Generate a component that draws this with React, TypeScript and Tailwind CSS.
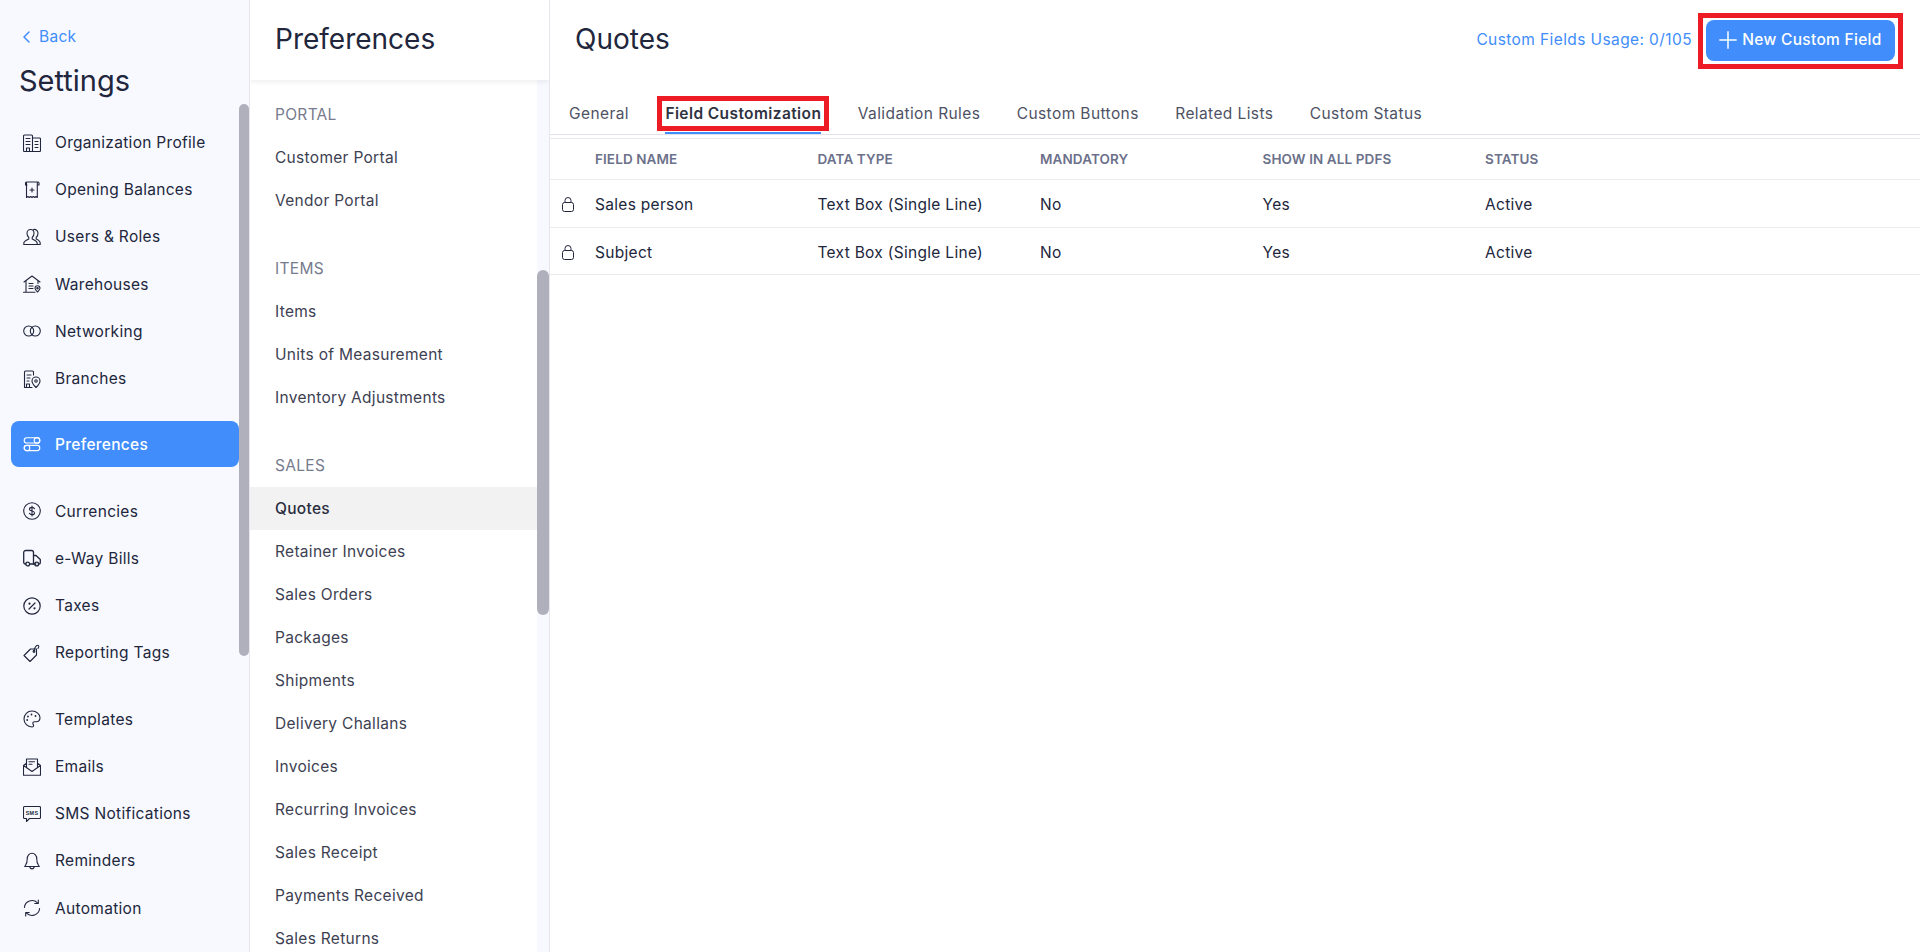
import React from 'react';

type Icon = { children: React.ReactNode };

function Ico({ children }: Icon) {
  return (
    <svg width="18" height="18" viewBox="0 0 18 18" fill="none" stroke="currentColor" strokeWidth="1.100" strokeLinecap="round" strokeLinejoin="round" className="shrink-0">
      {children}
    </svg>
  );
}

const icons: Record<string, React.ReactNode> = {
  org: (
    <>
      <path d="M.5 16.500V2A1 1 0 0 1 1.500 1h7a1 1 0 0 1 1 1v15.500h-8a1 1 0 0 1-1-1z" />
      <path d="M9.500 4h7a1 1 0 0 1 1 1v11.500a1 1 0 0 1-1 1h-7" />
      <path d="M3 4.500h4M3 7.500h4M3 10.500h4M3.500 17.500V14h3v3.500M12 7.500h3M12 10.500h3M12 13.500h3" />
    </>
  ),
  opening: (
    <>
      <path d="M3.500 1h11.500a1 1 0 0 1 1 1v2h-1.500M3.500 1a1 1 0 0 0-1 1v2H4" />
      <path d="M3.500 1.500v15l1.500-1 1.300 1 1.400-1 1.300 1 1.300-1 1.400 1 1.300-1 1.300 1V1.500" />
      <path d="M9 7v4M7 9h4" />
    </>
  ),
  users: (
    <>
      <path d="M7.500 1.500c-2 0-3.500 1.500-3.500 3.700 0 1.800.7 3.300 1.800 4.300v1.500C4 11.800.8 13 .8 15.200v1.300h13.400v-1.300c0-2.200-3.200-3.400-5-4.200V9.500c1.100-1 1.800-2.500 1.800-4.300 0-2.200-1.500-3.700-3.500-3.700z" />
      <path d="M10.500 1.500c2.200-.4 4.500 1 4.500 3.700 0 1.800-.7 3.300-1.800 4.300v1.500c1.800.8 4 2 4 4.200v1.300h-3" />
    </>
  ),
  warehouse: (
    <>
      <path d="M1 7l8-6 8 6" />
      <path d="M3 6v11.300M15 6v2.500M.5 17.300h11.500" />
      <path d="M6 8.500h4M6 11h4M6 13.500h4" />
      <path d="M14.500 17c-1.500-1.500-2.500-2.500-2.500-3.800a2.500 2.500 0 0 1 5 0c0 1.300-1 2.300-2.500 3.800z" />
      <circle cx="14.500" cy="13.200" r=".7" />
    </>
  ),
  network: (
    <>
      <circle cx="5.700" cy="9" r="5" />
      <circle cx="12.300" cy="9" r="5" />
    </>
  ),
  branches: (
    <>
      <path d="M10.500 5V2a1 1 0 0 0-1-1h-7a1 1 0 0 0-1 1v15.500h7.500" />
      <path d="M4 5h4M4 8h3M4 11h2M3.500 17.500V14h3v3.500" />
      <path d="M13 17.500c-2-2-4-4-4-6.500a4 4 0 0 1 8 0c0 2.500-2 4.500-4 6.500z" />
      <circle cx="13" cy="11" r="1.200" />
    </>
  ),
  prefs: (
    <>
      <rect x="1.200" y="2.800" width="15.600" height="5.200" rx="2.600" />
      <circle cx="14" cy="5.400" r="2.800" />
      <rect x="1.200" y="10.400" width="15.600" height="5.200" rx="2.600" />
      <circle cx="4" cy="13" r="2.800" />
    </>
  ),
  currency: (
    <>
      <circle cx="9" cy="9" r="8.300" />
      <path d="M11.500 6.800c-.4-1-1.400-1.400-2.500-1.400-1.400 0-2.500.7-2.500 1.800 0 2.500 5 1.200 5 3.700 0 1.100-1.100 1.800-2.500 1.800-1.100 0-2.100-.4-2.500-1.400M9 4v10" />
    </>
  ),
  truck: (
    <>
      <path d="M2.800 15H2.500A1.800 1.800 0 0 1 .7 13.200V3.500A2 2 0 0 1 2.700 1.500h5.800a2 2 0 0 1 2 2V15H6.500" strokeWidth="1.300" />
      <path d="M10.500 6.500h2.500l4.300 4v3.200a1.300 1.300 0 0 1-1.300 1.300h-.5M12.800 15h-2.300" strokeWidth="1.300" />
      <circle cx="4.700" cy="15" r="1.900" strokeWidth="1.300" />
      <circle cx="13.700" cy="15" r="1.900" strokeWidth="1.300" />
    </>
  ),
  taxes: (
    <>
      <circle cx="9" cy="9" r="8.200" strokeWidth="1.200" />
      <path d="M6 12l6-6" strokeWidth="1.200" />
      <circle cx="6.500" cy="6.700" r="1.100" fill="currentColor" stroke="none" />
      <circle cx="11.500" cy="11.300" r="1.100" fill="currentColor" stroke="none" />
    </>
  ),
  tag: (
    <>
      <path d="M7.500 5h6v6l-6.500 6.500-6-6z" />
      <circle cx="11" cy="7.500" r=".9" />
      <path d="M11 6.700c.3-2 1.800-5.500 3.700-5.500 1.500 0 1.300 2 .3 3.300" />
    </>
  ),
  palette: (
    <>
      <path d="M9 1C4.500 1 1 4.500 1 9s3.500 8 8 8c1 0 1.600-.7 1.600-1.500 0-.5-.2-.8-.4-1.100-.3-.4-.4-.7-.4-1.100 0-.9.7-1.600 1.500-1.600h1.900c2.300 0 3.800-1.800 3.800-4.200C17 4.500 13.500 1 9 1z" />
      <circle cx="5" cy="6.500" r=".9" fill="currentColor" stroke="none" />
      <circle cx="8.500" cy="4.500" r=".9" fill="currentColor" stroke="none" />
      <circle cx="12.500" cy="6" r=".9" fill="currentColor" stroke="none" />
      <circle cx="4.200" cy="10" r=".9" fill="currentColor" stroke="none" />
    </>
  ),
  email: (
    <>
      <path d="M.5 7.500v9.800h17V7.500L9 13.500z" />
      <path d="M.5 7.500L3.500 5.200M17.500 7.500l-3-2.300M3.500 9.500V1h11v8.500" />
      <path d="M6 3.800h5.500M6 6.300h3" />
    </>
  ),
  sms: (
    <>
      <path d="M1.500 1.500h15a1 1 0 0 1 1 1v10a1 1 0 0 1-1 1H6.500L3.500 16.500v-3h-2a1 1 0 0 1-1-1v-10a1 1 0 0 1 1-1z" />
      <text x="9" y="9.700" textAnchor="middle" fontSize="5.400" fontWeight="700" fill="currentColor" stroke="none" fontFamily="Liberation Sans, sans-serif">SMS</text>
    </>
  ),
  bell: (
    <>
      <path d="M2.800 12.700c1-1.300 1.400-2.300 1.400-5.700C4.200 3.800 6.300 1.300 9 1.300s4.800 2.500 4.800 5.700c0 3.400.4 4.400 1.400 5.700l1.100 1.800H1.700z" />
      <path d="M6.800 15c.3 1.200 1.100 1.900 2.200 1.900s1.900-.7 2.200-1.900" />
    </>
  ),
  auto: (
    <>
      <path d="M1.400 8.500A7.700 7.700 0 0 1 14.500 3.800" />
      <path d="M15.300 1v3.500h-3.500" />
      <path d="M16.600 9.500A7.700 7.700 0 0 1 3.500 14.200" />
      <path d="M2.700 17v-3.500h3.500" />
    </>
  ),
};

const navGroups = [
  [
    ['Organization Profile', 'org'],
    ['Opening Balances', 'opening'],
    ['Users & Roles', 'users'],
    ['Warehouses', 'warehouse'],
    ['Networking', 'network'],
    ['Branches', 'branches'],
  ],
  [['Preferences', 'prefs']],
  [
    ['Currencies', 'currency'],
    ['e-Way Bills', 'truck'],
    ['Taxes', 'taxes'],
    ['Reporting Tags', 'tag'],
  ],
  [
    ['Templates', 'palette'],
    ['Emails', 'email'],
    ['SMS Notifications', 'sms'],
    ['Reminders', 'bell'],
    ['Automation', 'auto'],
  ],
];

const prefSections = [
  { title: 'PORTAL', items: ['Customer Portal', 'Vendor Portal'] },
  { title: 'ITEMS', items: ['Items', 'Units of Measurement', 'Inventory Adjustments'] },
  {
    title: 'SALES',
    items: [
      'Quotes',
      'Retainer Invoices',
      'Sales Orders',
      'Packages',
      'Shipments',
      'Delivery Challans',
      'Invoices',
      'Recurring Invoices',
      'Sales Receipt',
      'Payments Received',
      'Sales Returns',
    ],
  },
];

const tabs = ['General', 'Field Customization', 'Validation Rules', 'Custom Buttons', 'Related Lists', 'Custom Status'];
const columns = ['FIELD NAME', 'DATA TYPE', 'MANDATORY', 'SHOW IN ALL PDFS', 'STATUS'];
const rows = [
  ['Sales person', 'Text Box (Single Line)', 'No', 'Yes', 'Active'],
  ['Subject', 'Text Box (Single Line)', 'No', 'Yes', 'Active'],
];

function Sidebar() {
  return (
    <aside className="flex h-full w-[250px] shrink-0 border-r border-[#e6e6ec] bg-[#f8f9fe]">
      <div className="min-w-0 flex-1">
        <a className="mt-[26px] flex h-[22px] items-center gap-[9px] pl-[23px] text-[15.500px] text-[#408dfb]">
          <svg width="7" height="12" viewBox="0 0 7 12" fill="none" stroke="currentColor" strokeWidth="1.500" strokeLinecap="round" strokeLinejoin="round">
            <path d="M6 1L1 6l5 5" />
          </svg>
          Back
        </a>
        <h1 className="mt-[11px] h-[44px] pl-[19px] text-[29px] leading-[44px] font-normal tracking-normal text-[#21263c]">Settings</h1>
        <nav className="mt-[16px] flex flex-col gap-[19.500px] pl-[11px]">
          {navGroups.map((group, i) => (
            <ul key={i}>
              {group.map(([label, icon]) => {
                const active = label === 'Preferences';
                return (
                  <li
                    key={label}
                    className={
                      active
                        ? '-mt-[1px] mb-[1.500px] flex h-[46px] items-center gap-[14px] rounded-lg bg-[#408dfb] pt-[1px] pl-[12px] text-[15.500px] font-medium text-white'
                        : 'flex h-[47.200px] items-center gap-[14px] pl-[12px] text-[15.500px] text-[#21263c]'
                    }
                  >
                    <Ico>{icons[icon]}</Ico>
                    {label}
                  </li>
                );
              })}
            </ul>
          ))}
        </nav>
      </div>
      <div className="w-[10px] shrink-0">
        <div className="mt-[104px] h-[552px] rounded-lg bg-[#b0afbc]" />
      </div>
    </aside>
  );
}

function PrefsPane() {
  return (
    <section className="flex h-full w-[300px] shrink-0 flex-col overflow-hidden border-r border-[#e6e6ec] bg-white">
      <header className="relative z-10 h-[80px] shrink-0 bg-white pl-[25px] leading-[78px] shadow-[0_2px_5px_rgba(0,0,0,0.07)]">
        <h2 className="text-[28px] font-normal tracking-normal text-[#21263c]">Preferences</h2>
      </header>
      <div className="flex min-h-0 flex-1">
        <div className="min-w-0 flex-1 pt-[13px]">
          {prefSections.map((s) => (
            <div key={s.title} className="mb-[25px]">
              <div className="flex h-[43px] items-center pl-[25px] text-[15.500px] text-[#777b8d]">{s.title}</div>
              {s.items.map((item) => (
                <div
                  key={item}
                  className={
                    item === 'Quotes'
                      ? 'flex h-[43px] items-center bg-[#f2f2f2] pl-[25px] text-[15.500px] font-medium text-[#2a2e3f]'
                      : 'flex h-[43px] items-center pl-[25px] text-[15.500px] text-[#3d4152]'
                  }
                >
                  {item}
                </div>
              ))}
            </div>
          ))}
        </div>
        <div className="w-[12px] shrink-0 bg-[#f8f9fe]">
          <div className="mt-[190px] h-[345px] rounded-lg bg-[#b0afbc]" />
        </div>
      </div>
    </section>
  );
}

function Main() {
  return (
    <main className="flex h-full min-w-0 flex-1 flex-col bg-white">
      <header className="flex h-[80px] shrink-0 items-center justify-between px-[25px]">
        <h2 className="-mt-[2px] text-[28px] font-normal tracking-normal text-[#21263c]">Quotes</h2>
        <div className="flex items-center gap-[14px]">
          <span className="text-[15.500px] tracking-[0.400px] text-[#408dfb]">Custom Fields Usage: 0/105</span>
          <button className="relative flex h-[41px] w-[189px] items-center justify-center gap-[5px] rounded-lg bg-[#408dfb] text-[15.500px] font-medium text-white">
            <svg width="18" height="18" viewBox="0 0 18 18" fill="none" stroke="currentColor" strokeWidth="1.500" strokeLinecap="round" className="shrink-0">
              <path d="M9 .8v16.400M.8 9h16.400" />
            </svg>
            New Custom Field
            <span className="absolute -top-[7px] -right-[8px] -bottom-[8px] -left-[8px] border-[5px] border-[#ed1c24]" />
          </button>
        </div>
      </header>

      <div className="flex h-[55px] shrink-0 gap-[36.500px] border-b border-[#e3e4ea] pl-[19px] tracking-[0.400px]">
        {tabs.map((tab) => {
          const active = tab === 'Field Customization';
          return (
            <div
              key={tab}
              className={
                active
                  ? 'flex items-center border-b-[2px] border-[#408dfb] pt-[15px] text-[15.500px] font-semibold text-[#2f3342]'
                  : 'flex items-center pt-[15px] pb-[2px] text-[15.500px] text-[#4e5264]'
              }
            >
              <span className="relative">
                {tab}
                {active && <span className="absolute -top-[6px] -right-[8px] -bottom-[6px] -left-[8px] border-[5px] border-[#ed1c24]" />}
              </span>
            </div>
          );
        })}
      </div>

      <div className="mt-[3px] border-t border-[#e9e9ef]">
        <div className="flex h-[41px] items-center border-b border-[#ebebef] pl-[45px] text-[13.500px] font-semibold tracking-[0.100px] text-[#6c718a]">
          {columns.map((c) => (
            <div key={c} className="w-[222.500px] shrink-0">{c}</div>
          ))}
        </div>
        {rows.map((r) => (
          <div key={r[0]} className="flex h-[47.500px] items-center border-b border-[#ebebef] pt-[3px] text-[15.500px] text-[#21263c]">
            <div className="flex w-[45px] shrink-0 justify-start pl-[12px]">
              <svg width="12" height="15" viewBox="0 0 12 15" fill="none" stroke="currentColor" strokeWidth="1">
                <rect x=".5" y="5.500" width="11" height="9" rx="2" />
                <path d="M3 5.500V3.500a3 3 0 0 1 6 0v2" />
              </svg>
            </div>
            {r.map((cell, i) => (
              <div key={i} className="w-[222.500px] shrink-0">{cell}</div>
            ))}
          </div>
        ))}
      </div>
    </main>
  );
}

export default function App() {
  return (
    <div className="flex h-[952px] w-full overflow-hidden bg-white tracking-[0.300px] [font-family:Inter,sans-serif]">
      <Sidebar />
      <PrefsPane />
      <Main />
    </div>
  );
}
